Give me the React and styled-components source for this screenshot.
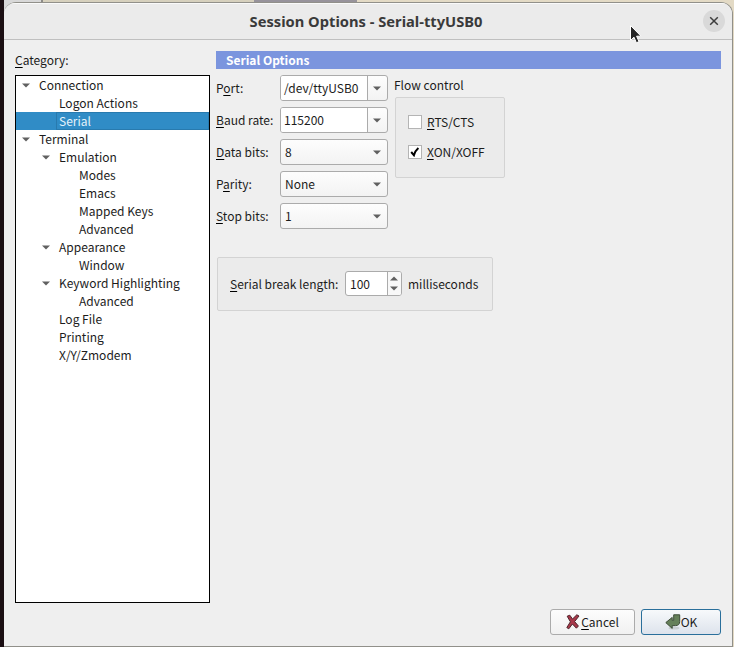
import React from "react";
import styled, { createGlobalStyle } from "styled-components";

const tree = [
  { label: "Connection", level: 0, open: true },
  { label: "Logon Actions", level: 1 },
  { label: "Serial", level: 1, selected: true },
  { label: "Terminal", level: 0, open: true },
  { label: "Emulation", level: 1, open: true },
  { label: "Modes", level: 2 },
  { label: "Emacs", level: 2 },
  { label: "Mapped Keys", level: 2 },
  { label: "Advanced", level: 2 },
  { label: "Appearance", level: 1, open: true },
  { label: "Window", level: 2 },
  { label: "Keyword Highlighting", level: 1, open: true },
  { label: "Advanced", level: 2 },
  { label: "Log File", level: 1 },
  { label: "Printing", level: 1 },
  { label: "X/Y/Zmodem", level: 1 },
];

const fields = [
  { before: "P", hotkey: "o", after: "rt:", value: "/dev/ttyUSB0", editable: true },
  { before: "", hotkey: "B", after: "aud rate:", value: "115200", editable: true },
  { before: "", hotkey: "D", after: "ata bits:", value: "8" },
  { before: "P", hotkey: "a", after: "rity:", value: "None" },
  { before: "", hotkey: "S", after: "top bits:", value: "1" },
];

const Arrow = ({ up }) => (
  <svg width="8" height="5" viewBox="0 0 8 5">
    <path d={up ? "M0 4.5L4 0.5L8 4.5Z" : "M0 0.5H8L4 4.5Z"} fill="#606060" />
  </svg>
);

const Field = ({ before, hotkey, after, value, editable }) => (
  <FieldRow>
    <FieldLabel>
      {before}
      <Key>{hotkey}</Key>
      {after}
    </FieldLabel>
    <Combo>
      <ComboValue $editable={editable}>{value}</ComboValue>
      <ComboArrow>
        <Arrow />
      </ComboArrow>
    </Combo>
  </FieldRow>
);

const App = () => {
  return (
    <>
      <GlobalStyle />
      <Desktop>
        <Dialog>
          <TitleBar>
            <Title>Session Options - Serial-ttyUSB0</Title>
            <CloseButton>
              <svg width="10" height="10" viewBox="0 0 10 10">
                <path d="M1.2 1.2L8.8 8.8M8.8 1.2L1.2 8.8" stroke="#3d3d3d" strokeWidth="1.5" />
              </svg>
            </CloseButton>
          </TitleBar>
          <Body>
            <Sidebar>
              <Caption>
                <Key>C</Key>ategory:
              </Caption>
              <Tree>
                {tree.map((item, i) => (
                  <TreeRow key={i} $level={item.level} $selected={item.selected}>
                    <Toggle>{item.open && <Arrow />}</Toggle>
                    <TreeLabel $selected={item.selected}>{item.label}</TreeLabel>
                  </TreeRow>
                ))}
              </Tree>
            </Sidebar>
            <Content>
              <Heading>Serial Options</Heading>
              <Settings>
                <Fields>
                  {fields.map((f) => (
                    <Field key={f.after} {...f} />
                  ))}
                </Fields>
                <Flow>
                  <FlowTitle>Flow control</FlowTitle>
                  <FlowBox>
                    <CheckRow>
                      <CheckBox />
                      <span>
                        <Key>R</Key>TS/CTS
                      </span>
                    </CheckRow>
                    <CheckRow>
                      <CheckBox>
                        <svg width="10" height="10" viewBox="0 0 10 10">
                          <path d="M1.2 5L3.9 8.2Q5 4 8.4 1" fill="none" stroke="#000" strokeWidth="2" />
                        </svg>
                      </CheckBox>
                      <span>
                        <Key>X</Key>ON/XOFF
                      </span>
                    </CheckRow>
                  </FlowBox>
                </Flow>
              </Settings>
              <BreakBox>
                <BreakLabel>
                  <Key>S</Key>erial break length:
                </BreakLabel>
                <Spin>
                  <SpinValue>100</SpinValue>
                  <SpinButtons>
                    <Arrow up />
                    <Arrow />
                  </SpinButtons>
                </Spin>
                <span>milliseconds</span>
              </BreakBox>
              <Actions>
                <Button $width={85}>
                  <svg width="14" height="16" viewBox="0 0 14 16">
                    <path
                      d="M1.2 2.2L3.8 1.2L6.5 5L10.8 0.8L13 2L8.6 7.6L12.4 12L10.4 14.2L6.4 10L2.8 14.8L0.8 13.6L4.4 7.8Z"
                      fill="#a8384a"
                      stroke="#4e252c"
                      strokeWidth="1"
                      strokeLinejoin="round"
                    />
                  </svg>
                  <ButtonLabel $gap={1}>
                    <Key>C</Key>ancel
                  </ButtonLabel>
                </Button>
                <Button $width={80} $primary>
                  <svg width="16" height="16" viewBox="0 0 16 16">
                    <ellipse cx="9" cy="14" rx="5.5" ry="1.6" fill="#c9ced2" />
                    <path
                      d="M8.7 0.8H14.7V7.5Q14.7 11.6 10.5 11.6H7.2V14.4L0.8 8.6L7.2 3.4V6.3H8.7Z"
                      fill="#65805a"
                      stroke="#3d4d38"
                      strokeWidth="1"
                      strokeLinejoin="round"
                    />
                  </svg>
                  <ButtonLabel>OK</ButtonLabel>
                </Button>
              </Actions>
            </Content>
          </Body>
        </Dialog>
        <Pointer width="14" height="21" viewBox="0 0 14 21">
          <path
            d="M1.5 1.5V16.4L5 13.2L7.4 18.8L10 17.6L7.6 12.2H12Z"
            fill="#242424"
            stroke="#fff"
            strokeWidth="1"
          />
        </Pointer>
      </Desktop>
    </>
  );
};

export default App;

const GlobalStyle = createGlobalStyle`
  * {
    box-sizing: border-box;
  }
  body {
    margin: 0;
    overflow: hidden;
    font: 12px/18px "Noto Sans CJK SC", sans-serif;
    color: #1c1c1c;
  }
  svg {
    display: block;
    flex: none;
  }
`;

const Desktop = styled.div`
  height: 647px;
  padding: 2px 1px 0 4px;
  background: linear-gradient(to right, #1b0f13 4px, #d8d8d8 4px, #d8d8d8 41px, #8d8b88 41px, #8d8b88 43px, #d6d0bd 43px, #d6d0bd 254px, #97939b 254px, #97939b 357px, #e3dac5 357px);
`;

const Dialog = styled.div`
  height: 645px;
  display: flex;
  flex-direction: column;
  background: #efefef;
  border: 1px solid #91908a;
  border-left: 0;
  border-radius: 12px 12px 0 0;
  overflow: hidden;
`;

const TitleBar = styled.div`
  height: 37px;
  flex: none;
  display: grid;
  grid-template-columns: 34px 1fr 38px;
  align-items: center;
  background: #ebebeb;
  border-top: 1px solid #fafafa;
  border-bottom: 1px solid #bfbfbf;
`;

const Title = styled.div`
  grid-column: 2;
  padding-bottom: 2px;
  text-align: center;
  font: bold 14.7px/20px "Noto Sans", sans-serif;
  color: #3a3a3a;
`;

const CloseButton = styled.div`
  width: 22px;
  height: 22px;
  margin: 0 0 2px 9px;
  border-radius: 50%;
  display: grid;
  place-items: center;
  background: #d9d9d9;
`;

const Body = styled.div`
  flex: 1;
  display: flex;
  gap: 6px;
  padding: 11px;
`;

const Sidebar = styled.div`
  width: 195px;
  height: 552px;
`;

const Caption = styled.div`
  height: 24px;
`;

const Key = styled.span`
  text-decoration: underline;
  text-decoration-color: #000;
  text-decoration-thickness: 1px;
  text-underline-offset: 2px;
  text-decoration-skip-ink: none;
`;

const Tree = styled.div`
  height: 528px;
  background: #fff;
  border: 1px solid #000;
`;

const TreeRow = styled.div`
  height: 18px;
  display: flex;
  padding-left: ${({ $level }) => 6 + $level * 20}px;
  background: ${({ $selected }) => ($selected ? "#308cc6" : "transparent")};
`;

const Toggle = styled.div`
  width: 14px;
  display: flex;
  align-items: center;
`;

const TreeLabel = styled.div`
  flex: 1;
  padding-left: 2px;
  border: 1px solid ${({ $selected }) => ($selected ? "#287aae" : "transparent")};
  line-height: 15px;
  color: ${({ $selected }) => ($selected ? "#e4f2fa" : "inherit")};
`;

const Content = styled.div`
  flex: 1;
  display: flex;
  flex-direction: column;
`;

const Heading = styled.div`
  height: 18px;
  padding-left: 10px;
  background: #7b95de;
  color: #fff;
  font-weight: bold;
`;

const Settings = styled.div`
  display: flex;
  gap: 6px;
  padding-top: 6px;
`;

const Fields = styled.div`
  display: flex;
  flex-direction: column;
  gap: 6px;
`;

const FieldRow = styled.div`
  display: flex;
  align-items: center;
`;

const FieldLabel = styled.div`
  width: 64px;
`;

const Combo = styled.div`
  width: 108px;
  height: 26px;
  display: flex;
  border: 1px solid #ababab;
  border-radius: 3px;
  background: linear-gradient(#fdfdfd, #f3f3f3);
  overflow: hidden;
`;

const ComboValue = styled.div`
  width: 87px;
  line-height: 24px;
  padding-left: ${({ $editable }) => ($editable ? 3 : 4)}px;
  border-right: 1px solid ${({ $editable }) => ($editable ? "#ababab" : "transparent")};
  background: ${({ $editable }) => ($editable ? "#fff" : "transparent")};
`;

const ComboArrow = styled.div`
  flex: 1;
  display: flex;
  align-items: center;
  padding-left: 4.5px;
`;

const Flow = styled.div`
  width: 111px;
`;

const FlowTitle = styled.div`
  height: 22px;
  padding-top: 1px;
`;

const FlowBox = styled.div`
  width: 110px;
  height: 81px;
  margin-left: 1px;
  padding: 15px 0 0 12px;
  display: flex;
  flex-direction: column;
  gap: 12px;
  border: 1px solid #d3d3d3;
  border-radius: 2px;
  background: #ebebeb;
`;

const CheckRow = styled.div`
  height: 18px;
  display: flex;
  align-items: center;
  gap: 5px;
`;

const CheckBox = styled.div`
  width: 14px;
  height: 14px;
  display: grid;
  place-items: center;
  border: 1px solid #b4b4b4;
  background: #fff;
`;

const BreakBox = styled.div`
  width: 276px;
  height: 54px;
  margin: 28px 0 0 1px;
  padding-left: 12px;
  display: flex;
  align-items: center;
  border: 1px solid #d3d3d3;
  border-radius: 2px;
  background: #ebebeb;
`;

const BreakLabel = styled.div`
  width: 115px;
  white-space: nowrap;
`;

const Spin = styled.div`
  width: 57px;
  height: 25px;
  margin: 0 6px 1px 0;
  display: flex;
  border: 1px solid #ababab;
  border-radius: 3px;
  background: #fff;
  overflow: hidden;
`;

const SpinValue = styled.div`
  width: 42px;
  line-height: 24px;
  padding-left: 4px;
  border-right: 1px solid #ababab;
`;

const SpinButtons = styled.div`
  flex: 1;
  display: flex;
  flex-direction: column;
  justify-content: center;
  gap: 5px;
  padding-left: 2px;
  background: #f8f8f8;
`;

const Actions = styled.div`
  margin-top: auto;
  display: flex;
  justify-content: flex-end;
  gap: 6px;
`;

const Button = styled.div`
  width: ${({ $width }) => $width}px;
  height: 26px;
  display: flex;
  align-items: center;
  justify-content: center;
  border: 1px solid ${({ $primary }) => ($primary ? "#2a6f9b" : "#ababab")};
  border-radius: 3px;
  background: ${({ $primary }) => ($primary ? "linear-gradient(#f7f9fb, #dde3ec)" : "linear-gradient(#fdfdfd, #f1f1f1)")};
`;

const ButtonLabel = styled.span`
  margin-left: ${({ $gap }) => $gap || 0}px;
`;

const Pointer = styled.svg`
  position: absolute;
  left: 629px;
  top: 24px;
`;
